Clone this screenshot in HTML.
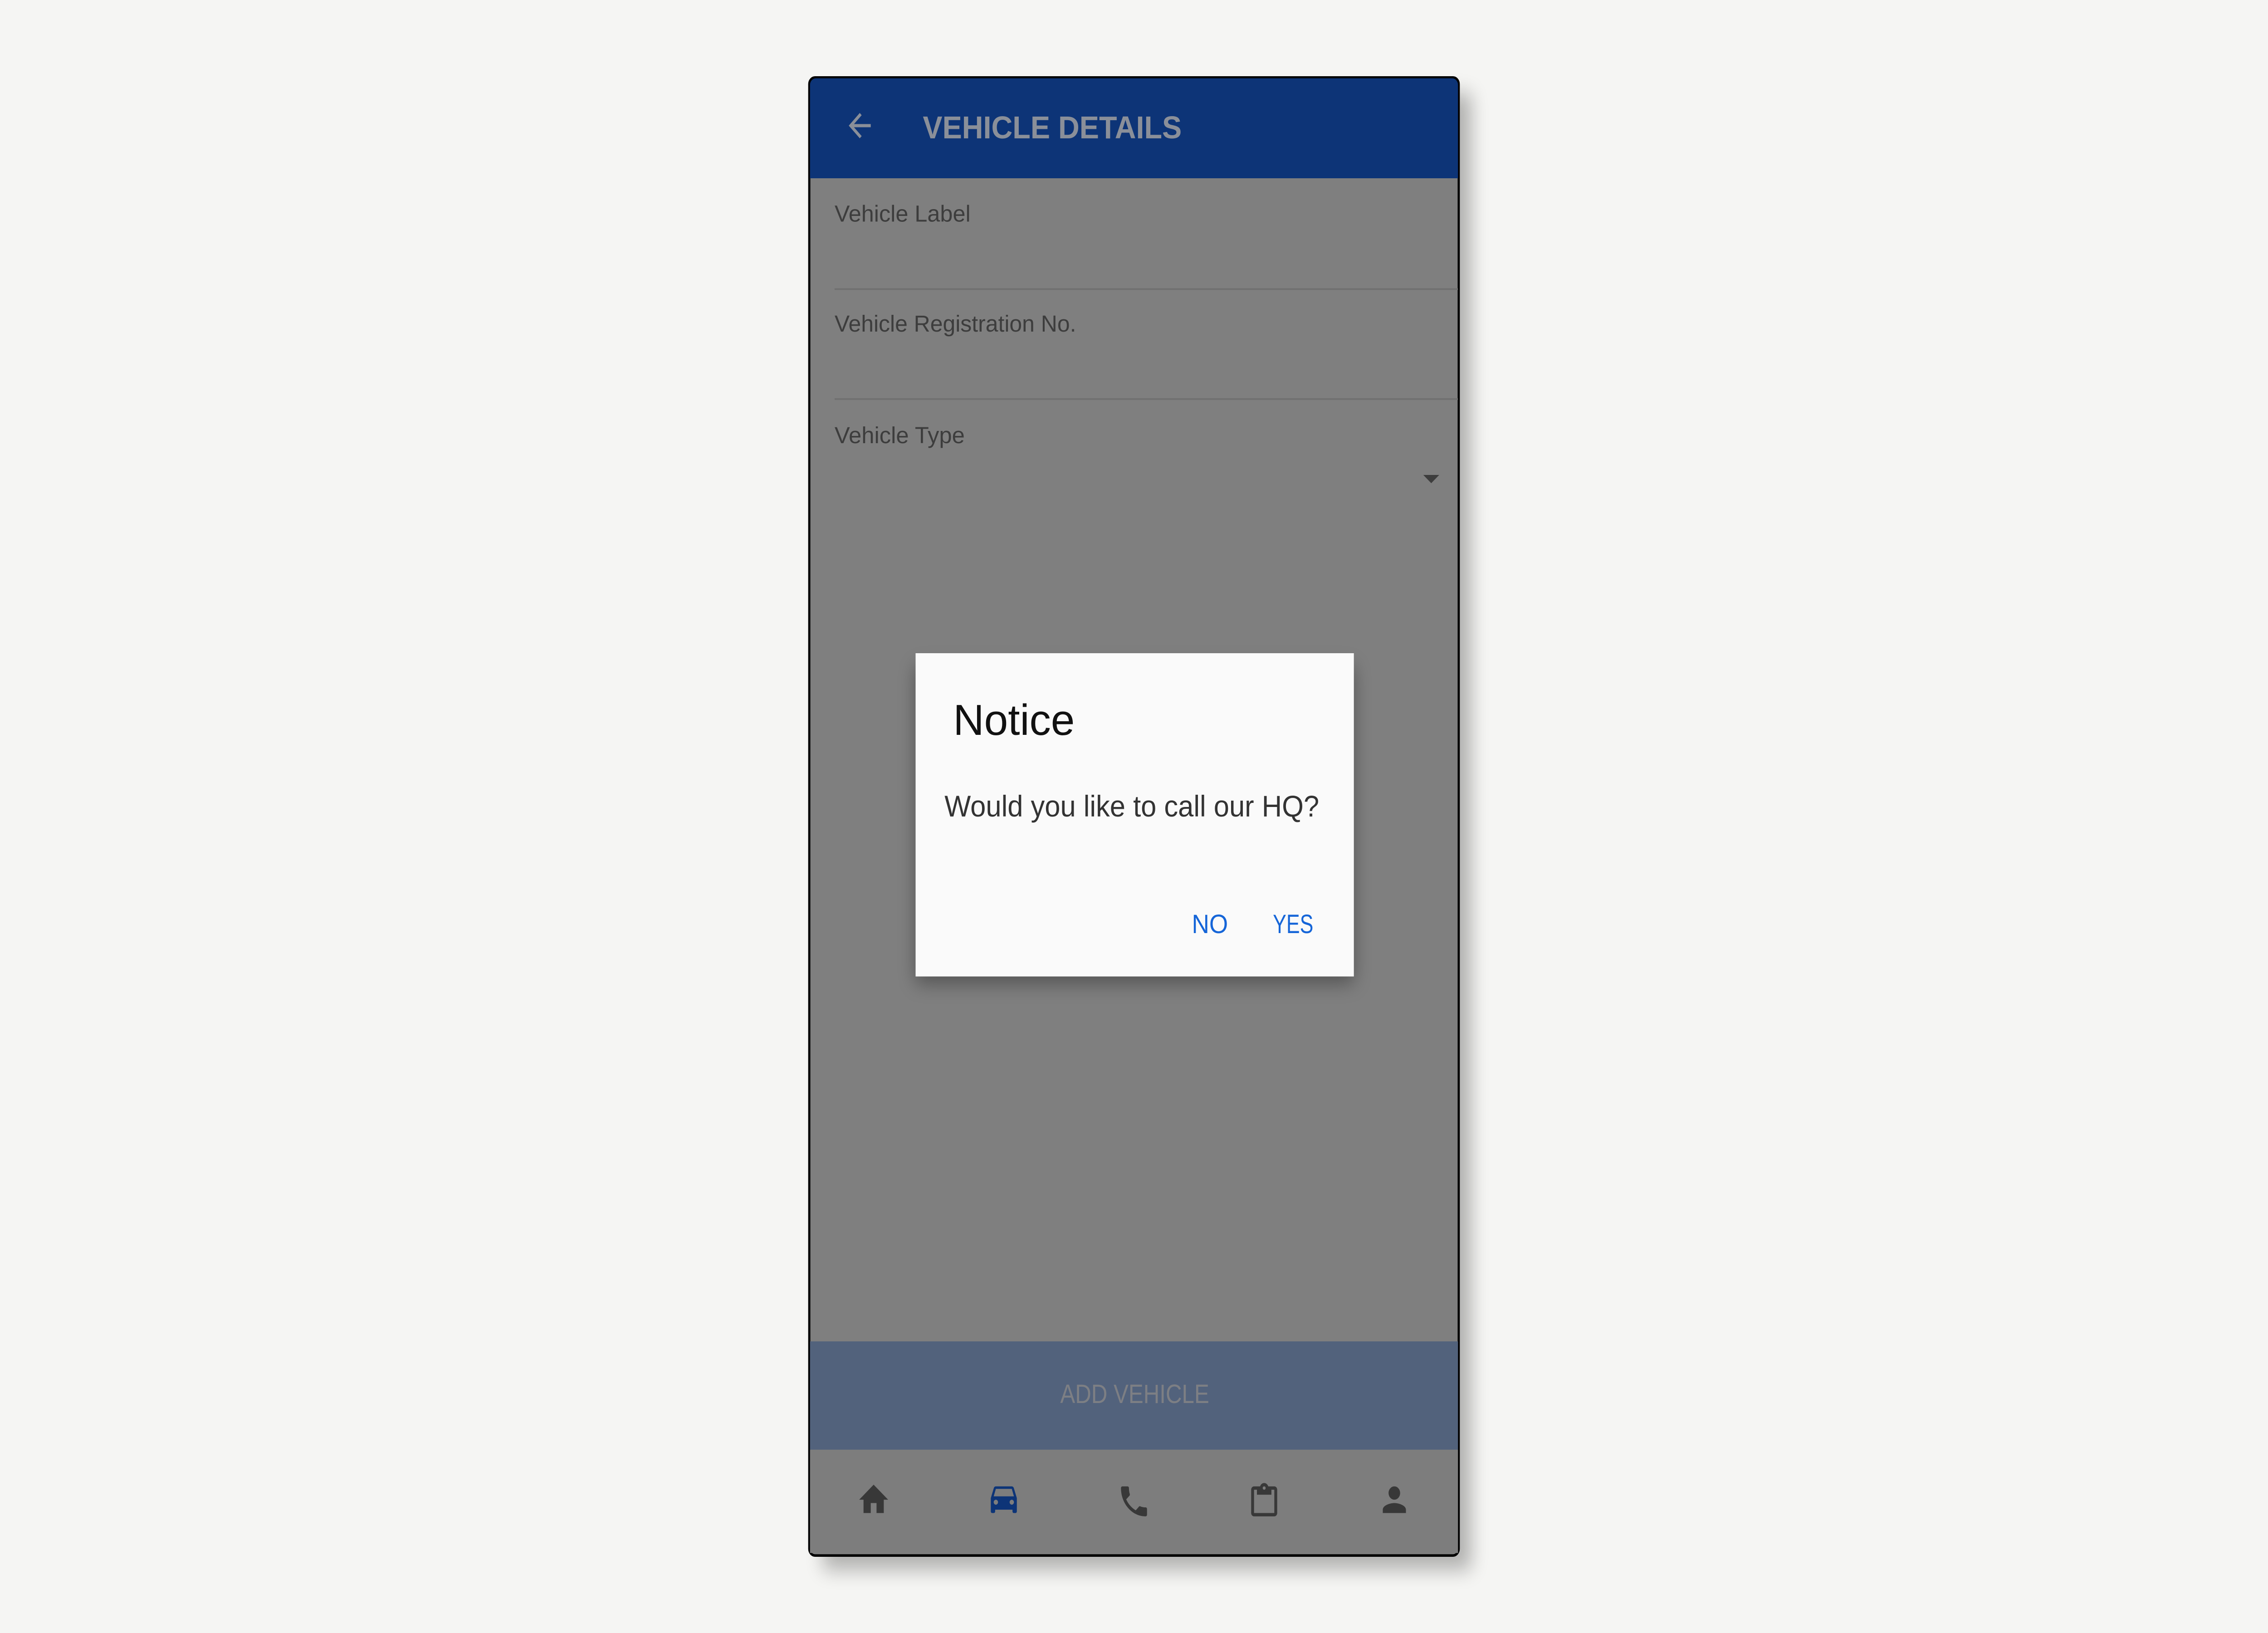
<!DOCTYPE html>
<html><head><meta charset="utf-8"><style>
html,body{margin:0;padding:0;background:#f5f5f3;overflow:hidden;width:100%;height:100%}
svg.root{display:block;width:100vw;height:100vh}
text{font-family:"Liberation Sans",sans-serif}
</style></head><body>
<svg class="root" viewBox="0 0 1568 980" preserveAspectRatio="none" xmlns="http://www.w3.org/2000/svg">
<defs><filter id="sh" x="-20%" y="-20%" width="140%" height="140%"><feGaussianBlur stdDeviation="6"/></filter></defs>
<rect x="0" y="0" width="1568" height="980" fill="#f5f5f3"/>
<rect x="569" y="56" width="448" height="886" fill="#000" opacity="0.28" filter="url(#sh)"/>
<rect x="559.5" y="46.5" width="449" height="887" rx="4" fill="#7f7f7f" stroke="#000" stroke-width="1.5"/>
<path d="M560 107V51a4 4 0 0 1 4-4h440a4 4 0 0 1 4 4v56z" fill="#0d3477"/>
<path transform="translate(583,64) scale(0.95)" d="M20 11H7.8l5.6-5.6L12 4l-8 8 8 8 1.4-1.4L7.8 13H20z" fill="#8a8f99"/>
<text x="638" y="83" font-size="19" font-weight="bold" fill="#8a8f99" textLength="179" lengthAdjust="spacingAndGlyphs">VEHICLE DETAILS</text>
<text x="577" y="133" font-size="14" fill="#3d3d3d" textLength="94" lengthAdjust="spacingAndGlyphs">Vehicle Label</text>
<rect x="577" y="173" width="431" height="1" fill="#707070"/>
<text x="577" y="199" font-size="14" fill="#3d3d3d" textLength="167" lengthAdjust="spacingAndGlyphs">Vehicle Registration No.</text>
<rect x="577" y="239" width="431" height="1" fill="#707070"/>
<text x="577" y="266" font-size="14" fill="#3d3d3d" textLength="90" lengthAdjust="spacingAndGlyphs">Vehicle Type</text>
<path d="M984 285h11l-5.5 5z" fill="#3d3d3d"/>
<rect x="560" y="805" width="448" height="65" fill="#52627c"/>
<text x="733" y="842" font-size="16" fill="#7d7f84" textLength="103" lengthAdjust="spacingAndGlyphs">ADD VEHICLE</text>
<rect x="560" y="870" width="448" height="62" fill="#7d7d7d"/>
<path transform="translate(592,888)" d="M10 20v-6h4v6h5v-8h3L12 3 2 12h3v8z" fill="#383838"/>
<path transform="translate(682,887)" d="M18.9 6c-.2-.6-.8-1-1.4-1h-11c-.7 0-1.2.4-1.4 1L3 12v8c0 .6.4 1 1 1h1c.6 0 1-.4 1-1v-1h12v1c0 .6.4 1 1 1h1c.6 0 1-.4 1-1v-8zM6.5 16c-.8 0-1.5-.7-1.5-1.5S5.7 13 6.5 13s1.5.7 1.5 1.5S7.3 16 6.5 16zm11 0c-.8 0-1.5-.7-1.5-1.5s.7-1.5 1.5-1.5 1.5.7 1.5 1.5-.7 1.5-1.5 1.5zM5 11l1.5-4.5h11L19 11z" fill="#0d3477"/>
<path transform="translate(772,889)" d="M6.6 10.8c1.4 2.8 3.8 5.1 6.6 6.6l2.2-2.2c.3-.3.7-.4 1-.2 1.1.4 2.3.6 3.6.6.6 0 1 .4 1 1V20c0 .6-.4 1-1 1C10.6 21 3 13.4 3 4c0-.6.5-1 1-1h3.5c.6 0 1 .4 1 1 0 1.3.2 2.5.6 3.6.1.3 0 .7-.2 1z" fill="#383838"/>
<path transform="translate(862,889)" d="M19 3h-4.2C14.4 1.8 13.3 1 12 1s-2.4.8-2.8 2H5c-1.1 0-2 .9-2 2v14c0 1.1.9 2 2 2h14c1.1 0 2-.9 2-2V5c0-1.1-.9-2-2-2zm-7 0c.6 0 1 .4 1 1s-.4 1-1 1-1-.4-1-1 .4-1 1-1zm7 16H5V5h2v3h10V5h2z" fill="#383838"/>
<path transform="translate(952,888)" d="M12 12c2.2 0 4-1.8 4-4s-1.8-4-4-4-4 1.8-4 4 1.8 4 4 4zm0 2c-2.7 0-8 1.3-8 4v2h16v-2c0-2.7-5.3-4-8-4z" fill="#383838"/>
<rect x="633" y="400" width="303" height="190" fill="#000" opacity="0.35" filter="url(#sh)"/>
<rect x="633" y="392" width="303" height="194" fill="#fafafa"/>
<text x="659" y="441" font-size="26" fill="#111" textLength="84" lengthAdjust="spacingAndGlyphs">Notice</text>
<text x="653" y="490" font-size="18" fill="#333" textLength="259" lengthAdjust="spacingAndGlyphs">Would you like to call our HQ?</text>
<text x="824" y="560" font-size="16" fill="#1565d8" textLength="25" lengthAdjust="spacingAndGlyphs">NO</text>
<text x="880" y="560" font-size="16" fill="#1565d8" textLength="28" lengthAdjust="spacingAndGlyphs">YES</text>
</svg>
</body></html>
